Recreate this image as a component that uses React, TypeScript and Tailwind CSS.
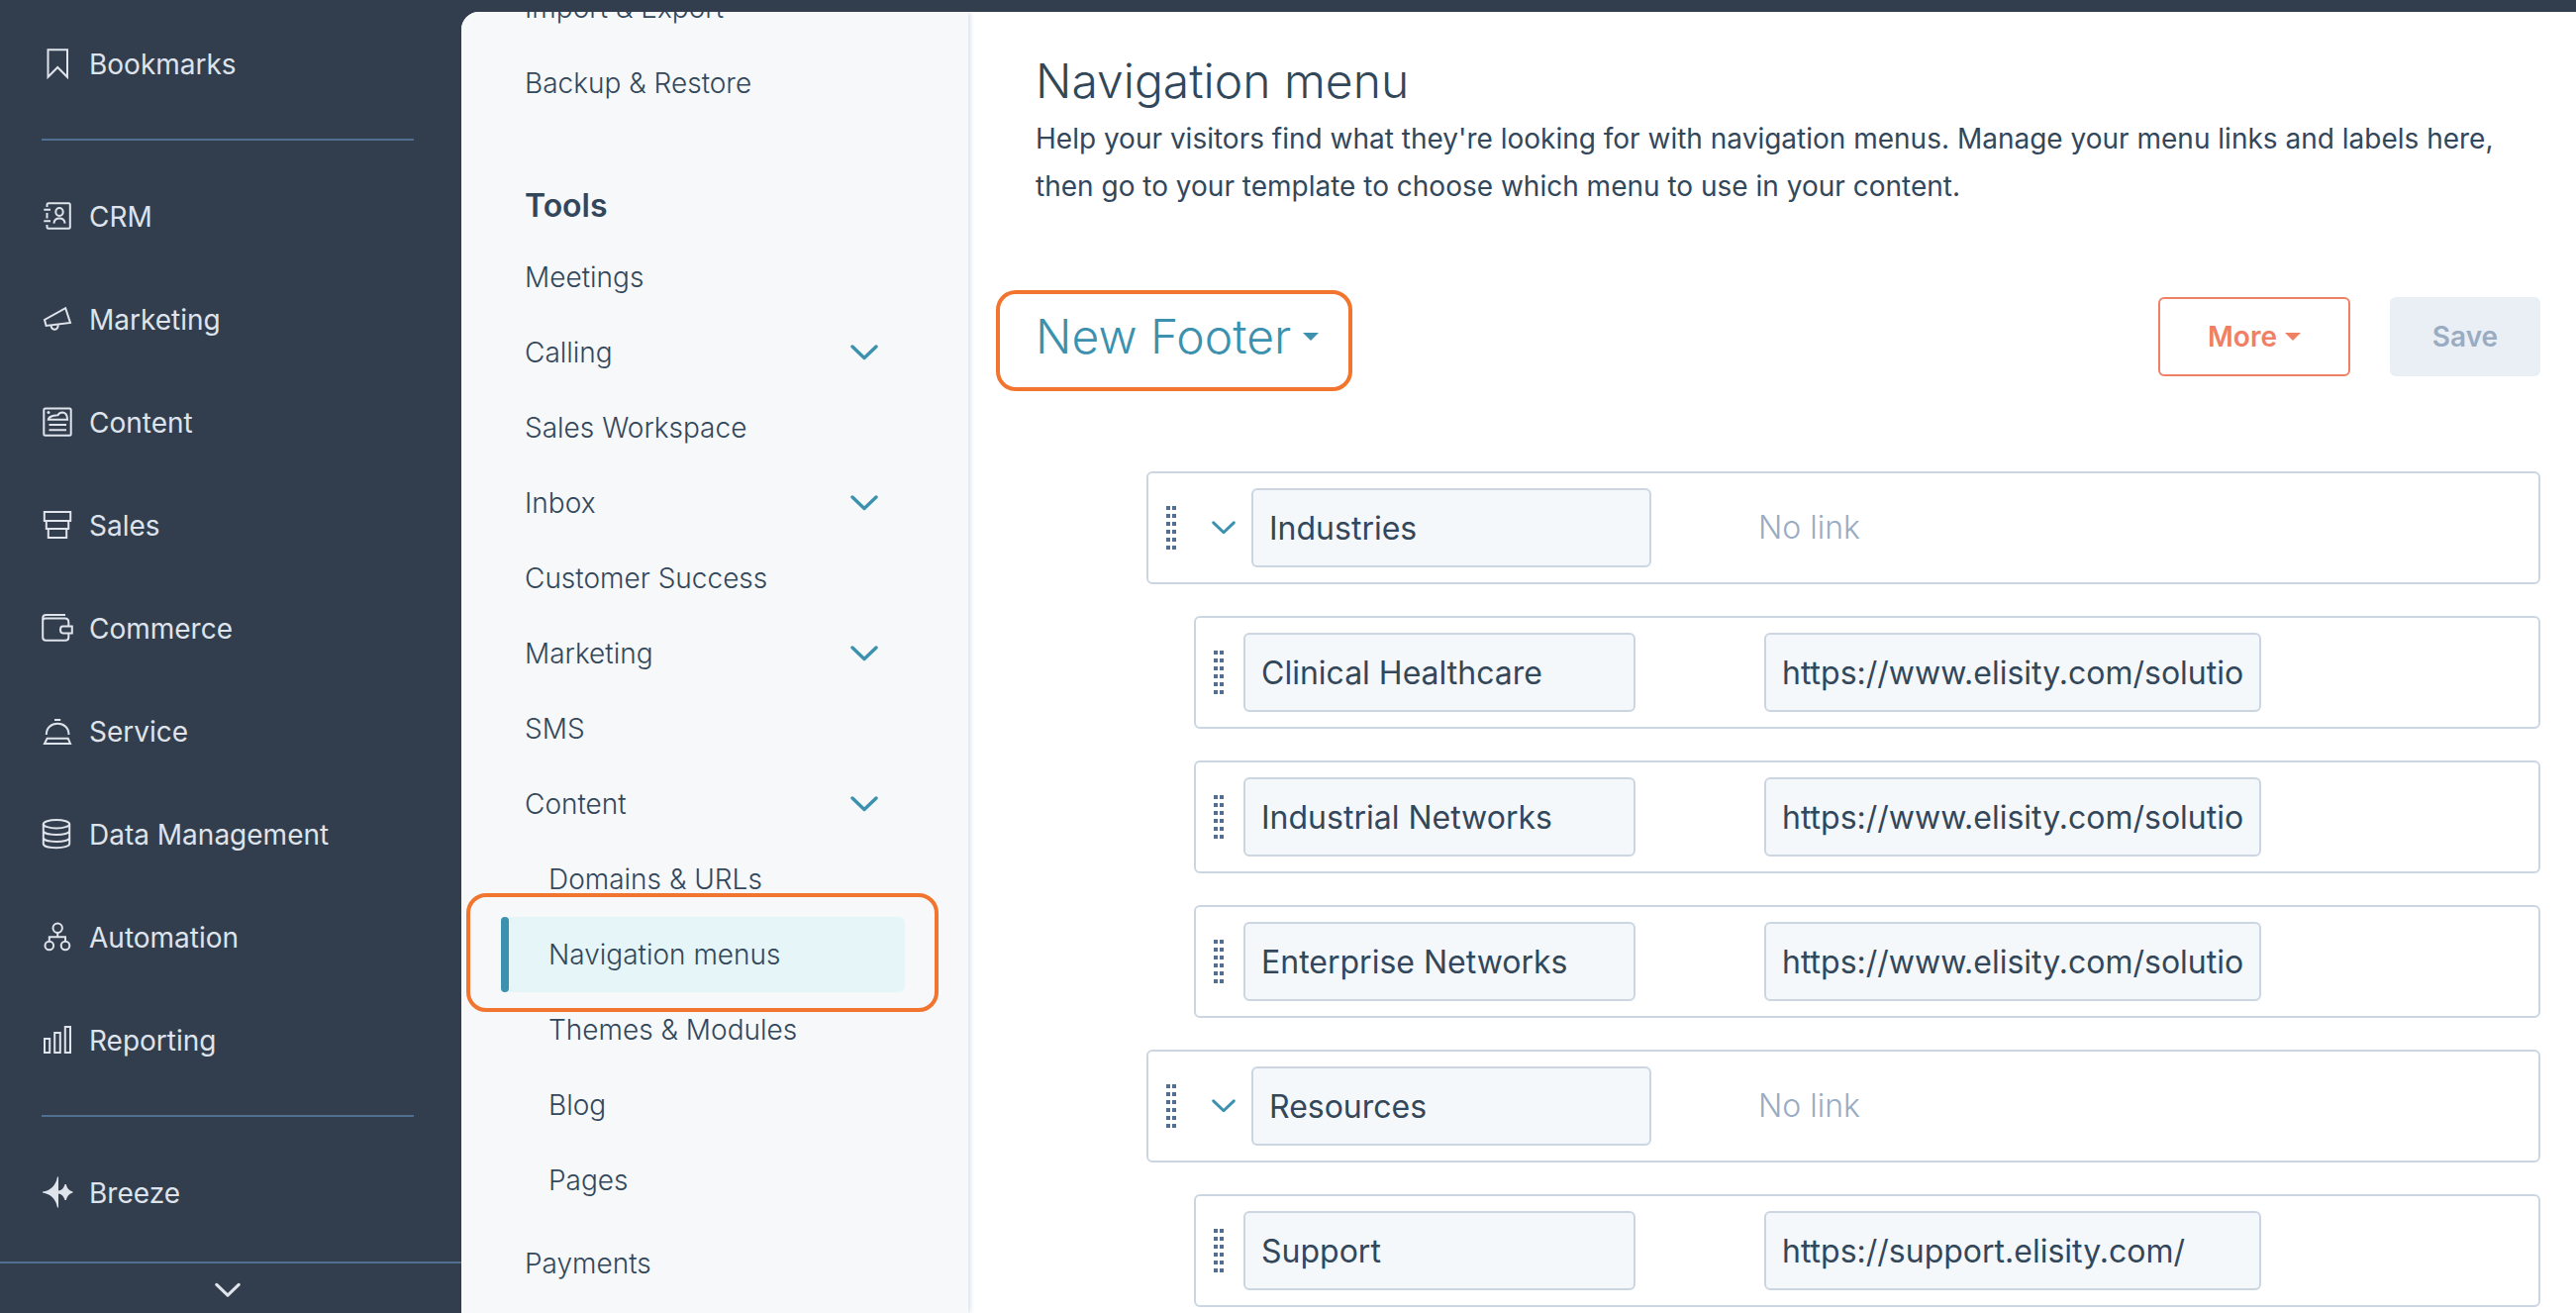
import type { ReactNode } from "react";

type IconName =
  | "bookmark" | "crm" | "marketing" | "content" | "sales" | "commerce"
  | "service" | "data" | "automation" | "reporting" | "breeze";

const iconShapes: Record<IconName, ReactNode> = {
  bookmark: <path d="M6.5 1.3H26V28.8L16.2 19 6.5 28.8z" />,
  crm: (
    <>
      <path d="M5.5 6V3.8q0-1.5 1.5-1.5H27.3q1.5 0 1.5 1.5V26.3q0 1.5-1.5 1.5H7q-1.5 0-1.5-1.5V24M5.5 12v5.5M2.3 8.7H9M2.3 20.3H9" />
      <ellipse cx="18" cy="11" rx="3.7" ry="4" />
      <path d="M12.4 22.6c.4-3.4 2.6-5 5.6-5s5.2 1.6 5.6 5" />
    </>
  ),
  marketing: <path d="M24.2 4.2 29 19 4.6 22 3 16zM9.6 22c.6 5.2 7 5 7.2-1" />,
  content: (
    <>
      <rect x="2.3" y="1.5" width="27.4" height="27.2" rx="1.5" />
      <circle cx="7" cy="5.5" r="1.5" fill="currentColor" stroke="none" />
      <path d="M6.8 12.8q.4-2.8 4.4-3.8t5.3-.8q1.5-2.7 4.8-2.7 4.7.5 4.8 7.3zM7.5 18H25M7.5 23.2H25" />
    </>
  ),
  sales: <path d="M2.8 2H29.2V11H2.8zM4.8 11V19H27.2V11M6.8 19V28H25.2V19" />,
  commerce: (
    <>
      <path d="M24 2H4.5Q1.2 2 1.2 5.3V24.5q0 3.3 3.3 3.3H24q3.3 0 3.3-3.3V20.5M1.2 8q0-2.4 3.3-2.4H23.5q3.800 0 3.800 4V13.5" />
      <path d="M30.8 13.6H21.5q-2.5 0-2.5 3.4t2.5 3.4H30.8z" />
    </>
  ),
  service: <path d="M13 4h6.2M4.800 19c0-7 5-11.3 11.4-11.3S27.5 12 27.5 19M5.6 22.800H26.800L29 28H3z" />,
  data: (
    <>
      <ellipse cx="15" cy="5.2" rx="13.2" ry="4.2" />
      <path d="M1.800 5.2V25c0 5.6 26.4 5.6 26.4 0V5.2M1.800 12c0 5.2 26.4 5.2 26.4 0M1.800 19c0 5.2 26.4 5.2 26.4 0" />
    </>
  ),
  automation: (
    <>
      <circle cx="16.2" cy="6.3" r="4.7" />
      <circle cx="7.800" cy="24" r="4.3" />
      <circle cx="24" cy="24" r="4.3" />
      <path d="M16.2 11v4.3M7.800 19.6V15.3H24v4.3" />
    </>
  ),
  reporting: <path d="M3 14H8.2V28H3zM13.2 8H18.800V28H13.2zM23.800 2H29V28H23.800z" />,
  breeze: (
    <path
      d="M16-.6H17V13.5Q21.5 13.5 23.6 7H24.800Q26 13 31.5 14.6V15.4Q26 17 24.800 23H23.6Q21.5 16.5 17 16.5V30.6H16Q13.5 17.5 1 15.5V14.5Q13.5 12.5 16-.6z"
      fill="currentColor"
      stroke="none"
    />
  ),
};

function NavIcon({ name }: { name: IconName }) {
  return (
    <svg viewBox="0 0 32 32" className="size-8 shrink-0 overflow-visible" fill="none" stroke="currentColor" strokeWidth="2" aria-hidden="true">
      {iconShapes[name]}
    </svg>
  );
}

function Chevron({ className }: { className: string }) {
  return (
    <svg viewBox="0 0 28 16" className={className} fill="none" stroke="currentColor" strokeWidth="3.4" strokeLinecap="round" strokeLinejoin="round" aria-hidden="true">
      <path d="M2 2 14 13.5 26 2" />
    </svg>
  );
}

function Caret() {
  return (
    <svg viewBox="0 0 16 8" className="h-2 w-4 shrink-0" fill="currentColor" aria-hidden="true">
      <path d="M0 0H16L8 8z" />
    </svg>
  );
}

function Grip() {
  return (
    <svg viewBox="0 0 10 44" className="h-11 w-2.5" fill="#516f90" aria-hidden="true">
      {[0, 8, 16, 24, 32, 40].map((y) => (
        <g key={y}>
          <rect x="0" y={y} width="4" height="4" />
          <rect x="6" y={y} width="4" height="4" />
        </g>
      ))}
    </svg>
  );
}

function NavLink({ icon, label }: { icon: IconName; label: string }) {
  return (
    <a href="#" className="flex h-26 items-center gap-4 px-[42px] text-[28px]">
      <NavIcon name={icon} />
      <span>{label}</span>
    </a>
  );
}

function Divider() {
  return <hr className="mt-[23px] mb-[25px] ml-[42px] mr-12 border-t-2 border-[#516f90]" />;
}

const mainLinks: { icon: IconName; label: string }[] = [
  { icon: "crm", label: "CRM" },
  { icon: "marketing", label: "Marketing" },
  { icon: "content", label: "Content" },
  { icon: "sales", label: "Sales" },
  { icon: "commerce", label: "Commerce" },
  { icon: "service", label: "Service" },
  { icon: "data", label: "Data Management" },
  { icon: "automation", label: "Automation" },
  { icon: "reporting", label: "Reporting" },
];

function PrimaryNav() {
  return (
    <nav aria-label="Primary" className="flex w-[466px] shrink-0 flex-col bg-[#323e4d] text-[#dfe3eb]">
      <div className="pt-[13px]">
        <NavLink icon="bookmark" label="Bookmarks" />
        <Divider />
        {mainLinks.map((link) => (
          <NavLink key={link.label} {...link} />
        ))}
        <Divider />
        <NavLink icon="breeze" label="Breeze" />
      </div>
      <button type="button" aria-label="Show more" className="mt-auto flex h-[52px] shrink-0 items-center justify-center border-t-2 border-[#516f90] pt-1 pr-1.5">
        <Chevron className="h-4 w-[26px]" />
      </button>
    </nav>
  );
}

function SettingsLink({ label, expandable = false }: { label: string; expandable?: boolean }) {
  if (expandable) {
    return (
      <button type="button" className="flex h-19 w-full items-center justify-between pr-[91px] pl-16 text-left">
        <span>{label}</span>
        <Chevron className="h-4 w-7 text-[#3b91ae]" />
      </button>
    );
  }
  return (
    <a href="#" className="flex h-19 items-center pl-16">
      {label}
    </a>
  );
}

function SubLink({ label }: { label: string }) {
  return (
    <a href="#" className="flex h-19 items-center pl-[88px]">
      {label}
    </a>
  );
}

function SettingsNav() {
  return (
    <nav aria-label="Settings" className="z-10 w-[512px] shrink-0 overflow-hidden bg-[#f6f8fa] text-[28px] font-light shadow-[1px_0_6px_#cbd6e2]">
      <div className="-mt-[42px]">
        <SettingsLink label="Import & Export" />
        <SettingsLink label="Backup & Restore" />
        <h2 className="flex h-30 items-center pt-[52px] pl-16 text-[32px] font-semibold">Tools</h2>
        <SettingsLink label="Meetings" />
        <SettingsLink label="Calling" expandable />
        <SettingsLink label="Sales Workspace" />
        <SettingsLink label="Inbox" expandable />
        <SettingsLink label="Customer Success" />
        <SettingsLink label="Marketing" expandable />
        <SettingsLink label="SMS" />
        <SettingsLink label="Content" expandable />
        <SubLink label="Domains & URLs" />
        <div className="relative">
          <a
            href="#"
            aria-current="page"
            className="mr-16 ml-10 flex h-19 items-stretch rounded-md bg-[#e5f5f8]"
          >
            <span className="w-2 rounded-full bg-[#3b91ae]" />
            <span className="self-center pl-10">Navigation menus</span>
          </a>
          <div className="pointer-events-none absolute -top-6 right-[30px] -bottom-5 left-[5px] rounded-[20px] border-4 border-[#f1752f]" />
        </div>
        <SubLink label="Themes & Modules" />
        <SubLink label="Blog" />
        <SubLink label="Pages" />
        <div className="pt-2">
          <SettingsLink label="Payments" />
        </div>
      </div>
    </nav>
  );
}

type MenuItem = { label: string; url?: string; nested?: boolean };

const menuItems: MenuItem[] = [
  { label: "Industries" },
  { label: "Clinical Healthcare", url: "https://www.elisity.com/solutions/healthcare", nested: true },
  { label: "Industrial Networks", url: "https://www.elisity.com/solutions/industrial", nested: true },
  { label: "Enterprise Networks", url: "https://www.elisity.com/solutions/enterprise", nested: true },
  { label: "Resources" },
  { label: "Support", url: "https://support.elisity.com/", nested: true },
];

const fieldClass = "h-20 rounded-md border-2 border-[#cbd6e2] bg-[#f5f8fa] px-4 text-[32px] outline-none";

function ParentRow({ label }: MenuItem) {
  return (
    <li className="flex h-[114px] items-center rounded-md border-2 border-[#cbd6e2] pl-[18px]">
      <Grip />
      <button type="button" aria-label={`Collapse ${label}`} className="mr-4 ml-9">
        <Chevron className="h-3.5 w-6 text-[#3b91ae]" />
      </button>
      <input aria-label="Menu label" defaultValue={label} className={`${fieldClass} w-[404px]`} />
      <span className="ml-[108px] text-[32px] font-light text-[#99acc2]">No link</span>
    </li>
  );
}

function ChildRow({ label, url }: MenuItem) {
  return (
    <li className="ml-12 flex h-[114px] items-center rounded-md border-2 border-[#cbd6e2] pl-[18px]">
      <Grip />
      <input aria-label="Menu label" defaultValue={label} className={`${fieldClass} ml-5 w-[396px]`} />
      <input aria-label={`${label} link`} defaultValue={url} className={`${fieldClass} ml-[130px] w-[502px]`} />
    </li>
  );
}

export default function App() {
  return (
    <div className="flex h-screen overflow-hidden bg-[#323e4d] font-['Inter',sans-serif] text-[#33475b]">
      <PrimaryNav />
      <div className="mt-3 flex min-w-0 flex-1 overflow-hidden rounded-tl-[18px] bg-white">
        <SettingsNav />
        <main className="min-w-0 flex-1 pt-9 pr-9 pl-[68px]">
          <h1 className="text-[48px] leading-[68px] font-light">Navigation menu</h1>
          <p className="max-w-[1500px] text-[28px] leading-12">
            Help your visitors find what they're looking for with navigation menus. Manage your menu links and labels here, then go to your template to choose which menu to use in your content.
          </p>
          <div className="mt-[81px] -ml-10 flex items-start justify-between">
            <button
              type="button"
              aria-haspopup="menu"
              className="flex h-[102px] items-center gap-3 rounded-[20px] border-4 border-[#f1752f] pr-[30px] pb-2 pl-9 text-[48px] font-light text-[#3b91ae]"
            >
              New Footer
              <Caret />
            </button>
            <div className="flex gap-10 pt-[7px] text-[28px] font-semibold">
              <button type="button" aria-haspopup="menu" className="flex h-20 w-[194px] items-center justify-center gap-2 rounded-md border-2 border-[#f08064] text-[#f08064]">
                More
                <Caret />
              </button>
              <button type="button" disabled className="h-20 w-38 rounded-md bg-[#eaeff6] text-[#99acc2]">
                Save
              </button>
            </div>
          </div>
          <ul className="mt-[81px] ml-28 flex flex-col gap-8">
            {menuItems.map((item) => (item.nested ? <ChildRow key={item.label} {...item} /> : <ParentRow key={item.label} {...item} />))}
          </ul>
        </main>
      </div>
    </div>
  );
}
